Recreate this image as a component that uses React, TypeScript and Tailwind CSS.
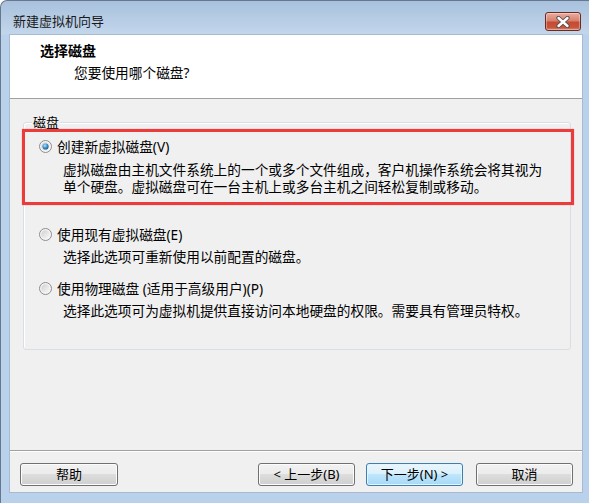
import React from 'react';

const Radio = ({ checked }: { checked?: boolean }) => (
  <svg width="13" height="13" viewBox="0 0 13 13" className="shrink-0">
    <defs>
      <linearGradient id="radioFace" x1="0" y1="0" x2="1" y2="1">
        <stop offset="0" stopColor="#cfcfcf" />
        <stop offset="1" stopColor="#fafafa" />
      </linearGradient>
      <radialGradient id="radioDot" cx="0.4" cy="0.35" r="0.75">
        <stop offset="0" stopColor="#b4e6fc" />
        <stop offset="0.5" stopColor="#3f92d0" />
        <stop offset="1" stopColor="#15476f" />
      </radialGradient>
    </defs>
    <circle cx="6.5" cy="6.5" r="6" fill="#f5f5f5" stroke="#8c8c8c" />
    <circle cx="6.5" cy="6.5" r="4.3" fill="url(#radioFace)" />
    {checked && <circle cx="6.5" cy="6.5" r="3.1" fill="url(#radioDot)" />}
  </svg>
);

const CloseButton = () => (
  <div className="mr-[2px] flex h-[19px] w-[36px] items-center justify-center rounded-[3px] border border-[#6b2a20] bg-[linear-gradient(to_bottom,#e9ada0_0%,#d8806c_45%,#c44a33_55%,#c9553b_85%,#dc8a70_100%)] shadow-[inset_0_0_0_1px_rgba(255,255,255,0.35)]">
    <svg width="16" height="12" viewBox="0 0 16 12">
      <path d="M3.5 2 L12.5 10 M12.5 2 L3.5 10" stroke="#4d4d4d" strokeWidth="4.2" strokeLinecap="round" />
      <path d="M3.5 2 L12.5 10 M12.5 2 L3.5 10" stroke="#ffffff" strokeWidth="2.4" strokeLinecap="round" />
    </svg>
  </div>
);

const WinButton = ({ children, primary, className = '' }: { children: React.ReactNode; primary?: boolean; className?: string }) => (
  <div
    className={`flex h-[23px] w-[97px] items-center justify-center rounded-[3px] border text-[13px] leading-none ${
      primary
        ? 'border-[#3c7fb1] bg-[linear-gradient(to_bottom,#eaf6fd_0%,#d9f0fc_50%,#bee6fd_50%,#a7d9f5_100%)] shadow-[inset_0_0_0_1px_#e4f5fd]'
        : 'border-[#707070] bg-[linear-gradient(to_bottom,#f2f2f2_0%,#ebebeb_50%,#dddddd_50%,#cfcfcf_100%)] shadow-[inset_0_0_0_1px_#fcfcfc]'
    } ${className}`}
  >
    {children}
  </div>
);

const OptionRow = ({ label, checked }: { label: string; checked?: boolean }) => (
  <div className="flex h-[17px] items-center">
    <Radio checked={checked} />
    <span className="ml-[5px] text-[13.7px] leading-[17px]">{label}</span>
  </div>
);

export default function App() {
  return (
    <div className="relative h-[503px] w-[589px] overflow-hidden bg-white text-black font-['Noto_Sans','Noto_Sans_CJK_SC',sans-serif]">
      <div className="flex h-full flex-col rounded-tl-[7px] border-l border-t border-[#66788e] bg-[linear-gradient(to_bottom,#a9c1dd_0px,#c2d6eb_33px,#b9d1ea_34px,#b9d1ea_100%)] pb-[10px] pl-[8px] pr-[6px]">
        {/* title bar */}
        <div className="flex h-[33px] items-start justify-between pt-[11px]">
          <span className="pl-[4px] text-[13px] leading-[19px] text-[#1a1a1a]">新建虚拟机向导</span>
          <CloseButton />
        </div>

        {/* client */}
        <div className="flex flex-1 flex-col border border-[#a7bad2] bg-[#f0f0f0]">
          <div className="h-[64px] border-b border-[#a0a0a0] bg-white pl-[30px] pt-[7px]">
            <div className="text-[14px] font-bold leading-[18px]">选择磁盘</div>
            <div className="mt-[4px] pl-[34px] text-[13.7px] leading-[18px]">您要使用哪个磁盘?</div>
          </div>

          <div className="flex-1">
            <div className="relative ml-[13px] mt-[23px] h-[228px] w-[548px] rounded-[3px] border border-[#d5dfe5] pl-[15px] pt-[15px] shadow-[inset_1px_1px_0_#ffffff]">
              <span className="absolute -top-[9px] left-[8px] bg-[#f0f0f0] px-[1px] text-[13px] leading-[17px]">磁盘</span>

              <OptionRow label="创建新虚拟磁盘(V)" checked />
              <div className="ml-[24px] mt-[6px] text-[13.7px] leading-[17px]">
                <div>虚拟磁盘由主机文件系统上的一个或多个文件组成，客户机操作系统会将其视为</div>
                <div>单个硬盘。虚拟磁盘可在一台主机上或多台主机之间轻松复制或移动。</div>
              </div>

              <div className="mt-[31px]">
                <OptionRow label="使用现有虚拟磁盘(E)" />
              </div>
              <div className="ml-[24px] mt-[5px] text-[13.7px] leading-[17px]">选择此选项可重新使用以前配置的磁盘。</div>

              <div className="mt-[15px]">
                <OptionRow label="使用物理磁盘 (适用于高级用户)(P)" />
              </div>
              <div className="ml-[24px] mt-[5px] text-[13.7px] leading-[17px]">
                选择此选项可为虚拟机提供直接访问本地硬盘的权限。需要具有管理员特权。
              </div>
            </div>
          </div>

          <div className="h-px bg-[#a0a0a0]" />
          <div className="h-px bg-white" />
          <div className="flex h-[40px] items-start pl-[10px] pr-[9px] pt-[11px]">
            <WinButton className="w-[98px]">帮助</WinButton>
            <div className="ml-auto flex">
              <WinButton>&lt; 上一步(B)</WinButton>
              <WinButton primary className="ml-[11px]">下一步(N) &gt;</WinButton>
              <WinButton className="ml-[13px]">取消</WinButton>
            </div>
          </div>
        </div>
      </div>

      {/* red annotation box */}
      <div className="absolute left-[22px] top-[129px] h-[76px] w-[552px] border-[3px] border-[#ec3b3b] shadow-[0_0_1px_#f08080]" />
    </div>
  );
}
